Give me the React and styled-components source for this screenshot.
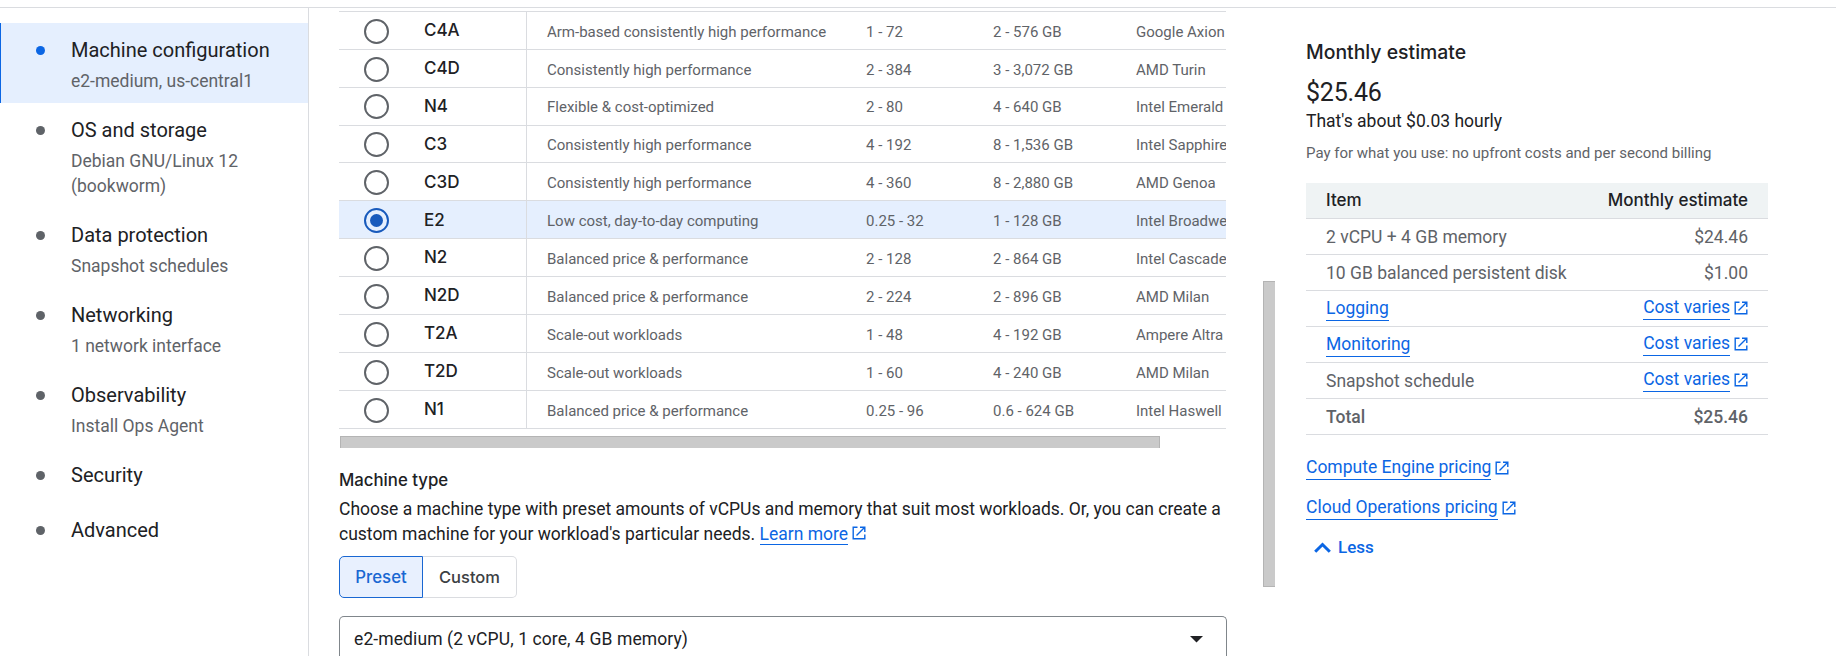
import React from "react";
import styled, { createGlobalStyle, css } from "styled-components";

const GlobalStyle = createGlobalStyle`
  * { box-sizing: border-box; }
  body {
    margin: 0;
    background: #fff;
    color: #202124;
    font-family: Roboto, "Liberation Sans", sans-serif;
    overflow: hidden;
  }
`;

const brand = css`
  font-family: Inter, "Liberation Sans", sans-serif;
  font-weight: 500;
`;

const Page = styled.div`
  height: 656px;
  padding-top: 7px;
  overflow: hidden;
`;

const Frame = styled.div`
  display: flex;
  height: 649px;
  border-top: 1px solid #dadce0;
`;

const Sidebar = styled.nav`
  width: 309px;
  flex: none;
  padding-top: 15px;
  border-right: 1px solid #dadce0;
`;

const Step = styled.div`
  display: flex;
  align-items: flex-start;
  padding: 15px 20px ${(p) => (p.$plain ? 15 : 9)}px 35px;
  border-left: 1px solid ${(p) => (p.$active ? "#0b66e4" : "transparent")};
  background: ${(p) => (p.$active ? "#e5effe" : "transparent")};
`;

const Dot = styled.span`
  width: 9px;
  height: 9px;
  margin: 8px 26px 0 0;
  border-radius: 50%;
  flex: none;
  background: ${(p) => (p.$active ? "#0b66e4" : "#5f6368")};
`;

const StepTitle = styled.div`
  font-size: 20px;
  line-height: 25px;
  white-space: nowrap;
`;

const StepNote = styled.div`
  width: 190px;
  margin-top: 6px;
  font-size: 17.5px;
  line-height: 25px;
  color: #5f6368;
`;

const Main = styled.main`
  width: 954px;
  flex: none;
  padding: 2.85px 0 0 30px;
  overflow: hidden;
`;

const TableView = styled.div`
  width: 887px;
  overflow: hidden;
`;

const Series = styled.div`
  width: 1080px;
  border-top: 1px solid #dadce0;
`;

const SeriesRow = styled.div`
  display: grid;
  grid-template-columns: 85px 103px 20px 319px 127px 143px 1fr;
  height: 37.9px;
  align-items: center;
  border-bottom: 1px solid #dadce0;
  background: ${(p) => (p.$selected ? "#e5effe" : "transparent")};
`;

const Radio = styled.span`
  display: flex;
  align-items: center;
  justify-content: center;
  width: 25px;
  height: 25px;
  margin: 1.85px 0 0 25px;
  border: 2px solid ${(p) => (p.$on ? "#185abc" : "#5f6368")};
  border-radius: 50%;

  &::after {
    content: "";
    width: 13px;
    height: 13px;
    border-radius: 50%;
    background: ${(p) => (p.$on ? "#185abc" : "transparent")};
  }
`;

const SeriesName = styled.div`
  ${brand}
  height: 100%;
  padding-top: 0.3px;
  border-right: 1px solid #dadce0;
  font-size: 17px;
  line-height: 36px;
`;

const Cell = styled.div`
  padding-top: 2.85px;
  font-size: 15px;
  line-height: 20px;
  color: #5f6368;
  white-space: nowrap;
`;

const ScrollX = styled.div`
  width: 820px;
  height: 12px;
  margin: 7px 0 0 1px;
  background: #cacaca;
  border: solid #b4b4b4;
  border-width: 1px 1px 0 1px;
`;

const MachineType = styled.section`
  width: 888px;
  padding-top: 20px;
`;

const SectionTitle = styled.h3`
  ${brand}
  margin: 0;
  font-size: 16.8px;
  line-height: 25px;
`;

const Paragraph = styled.p`
  margin: 4px 0 0;
  font-size: 17.5px;
  line-height: 25px;
  white-space: nowrap;
`;

const LinkText = styled.a`
  color: #0b66e4;
  border-bottom: 1px solid #0b66e4;
`;

const Toggle = styled.div`
  display: flex;
  width: 178px;
  height: 42px;
  margin-top: 9px;
`;

const ToggleButton = styled.button`
  ${brand}
  flex: ${(p) => (p.$on ? "0 0 84px" : "1")};
  padding: 0;
  border: 1px solid ${(p) => (p.$on ? "#1967d2" : "#dadce0")};
  border-left-width: ${(p) => (p.$on ? 1 : 0)}px;
  border-radius: ${(p) => (p.$on ? "5px 0 0 5px" : "0 5px 5px 0")};
  background: ${(p) => (p.$on ? "#e8f0fe" : "#fff")};
  color: ${(p) => (p.$on ? "#1967d2" : "#3c4043")};
  font-size: ${(p) => (p.$on ? 16.8 : 16.5)}px;
`;

const Select = styled.div`
  display: flex;
  align-items: center;
  justify-content: space-between;
  height: 46px;
  margin-top: 18px;
  padding: 0 23px 0 14px;
  border: 1px solid #80868b;
  border-bottom: 0;
  border-radius: 5px 5px 0 0;
  font-size: 17.5px;
  letter-spacing: 0.1px;
`;

const Rail = styled.div`
  width: 12px;
  flex: none;
  padding-top: 273px;
`;

const ScrollY = styled.div`
  height: 306px;
  background: #cacaca;
  border: solid #b4b4b4;
  border-width: 1px 0 1px 1px;
`;

const Estimate = styled.aside`
  width: 462px;
  margin-left: 31px;
  padding-top: 32px;
`;

const EstimateTitle = styled.h2`
  ${brand}
  margin: 0;
  font-size: 19.4px;
  line-height: 25px;
`;

const Price = styled.div`
  margin-top: 13px;
  font-size: 25px;
  line-height: 30px;
  letter-spacing: -0.2px;
`;

const Hourly = styled.div`
  margin-top: 1px;
  font-size: 17.5px;
  line-height: 25px;
`;

const Fine = styled.div`
  margin-top: 9px;
  font-size: 15px;
  line-height: 20px;
  color: #5f6368;
  white-space: nowrap;
`;

const CostTable = styled.div`
  margin-top: 20px;
`;

const CostRow = styled.div`
  display: flex;
  justify-content: space-between;
  align-items: center;
  height: 36px;
  padding: 0 20px;
  border-bottom: 1px solid #dadce0;
  color: #5f6368;
  font-size: 17.5px;
  font-weight: ${(p) => (p.$total ? 500 : 400)};
  line-height: 24px;
`;

const CostHead = styled(CostRow)`
  ${brand}
  padding-bottom: 2px;
  background: #eff3f4;
  color: #202124;
  font-size: 17px;
`;

const LinkWrap = styled.span`
  display: flex;
  align-items: center;
  line-height: 23px;
  margin-bottom: ${(p) => (p.$raised ? 1 : 0)}px;
`;

const MoreLinks = styled.div`
  display: flex;
  flex-direction: column;
  gap: 16px;
  margin-top: 21px;
  font-size: 17.5px;
`;

const Less = styled.button`
  display: flex;
  align-items: center;
  gap: 7px;
  margin-top: 17px;
  padding: 0 0 0 8px;
  border: 0;
  background: none;
  color: #0b66e4;
  font: 500 17px/20px Roboto, sans-serif;
`;

const Glyph = styled.svg`
  flex: none;
  margin-left: ${(p) => p.$gap || 0}px;
`;

function OpenIcon() {
  return (
    <Glyph $gap={4} width="14" height="14" viewBox="0 0 14 14" fill="none" stroke="#0b66e4" strokeWidth="1.4">
      <path d="M5.5 1.2H1.2V12.8H12.8V8.5M8 1.2H12.8V6M12.5 1.5L4.5 9.5" />
    </Glyph>
  );
}

function External({ children, raised }) {
  return (
    <LinkWrap $raised={raised}>
      <LinkText>{children}</LinkText>
      <OpenIcon />
    </LinkWrap>
  );
}

const steps = [
  ["Machine configuration", "e2-medium, us-central1"],
  ["OS and storage", "Debian GNU/Linux 12 (bookworm)"],
  ["Data protection", "Snapshot schedules"],
  ["Networking", "1 network interface"],
  ["Observability", "Install Ops Agent"],
  ["Security"],
  ["Advanced"],
];

const series = [
  ["C4A", "Arm-based consistently high performance", "1 - 72", "2 - 576 GB", "Google Axion"],
  ["C4D", "Consistently high performance", "2 - 384", "3 - 3,072 GB", "AMD Turin"],
  ["N4", "Flexible & cost-optimized", "2 - 80", "4 - 640 GB", "Intel Emerald"],
  ["C3", "Consistently high performance", "4 - 192", "8 - 1,536 GB", "Intel Sapphire"],
  ["C3D", "Consistently high performance", "4 - 360", "8 - 2,880 GB", "AMD Genoa"],
  ["E2", "Low cost, day-to-day computing", "0.25 - 32", "1 - 128 GB", "Intel Broadwell"],
  ["N2", "Balanced price & performance", "2 - 128", "2 - 864 GB", "Intel Cascade"],
  ["N2D", "Balanced price & performance", "2 - 224", "2 - 896 GB", "AMD Milan"],
  ["T2A", "Scale-out workloads", "1 - 48", "4 - 192 GB", "Ampere Altra"],
  ["T2D", "Scale-out workloads", "1 - 60", "4 - 240 GB", "AMD Milan"],
  ["N1", "Balanced price & performance", "0.25 - 96", "0.6 - 624 GB", "Intel Haswell"],
];

export default function App() {
  return (
    <Page>
      <GlobalStyle />
      <Frame>
        <Sidebar>
          {steps.map(([title, note], i) => (
            <Step key={title} $active={i === 0} $plain={!note}>
              <Dot $active={i === 0} />
              <div>
                <StepTitle>{title}</StepTitle>
                {note && <StepNote>{note}</StepNote>}
              </div>
            </Step>
          ))}
        </Sidebar>

        <Main>
          <TableView>
            <Series>
              {series.map(([name, desc, cpus, memory, platform]) => (
                <SeriesRow key={name} $selected={name === "E2"}>
                  <Radio $on={name === "E2"} />
                  <SeriesName>{name}</SeriesName>
                  <span />
                  <Cell>{desc}</Cell>
                  <Cell>{cpus}</Cell>
                  <Cell>{memory}</Cell>
                  <Cell>{platform}</Cell>
                </SeriesRow>
              ))}
            </Series>
          </TableView>
          <ScrollX />
          <MachineType>
            <SectionTitle>Machine type</SectionTitle>
            <Paragraph>
              Choose a machine type with preset amounts of vCPUs and memory that suit most workloads. Or, you can create a
              <br />
              custom machine for your workload's particular needs. <LinkText>Learn more</LinkText>
              <OpenIcon />
            </Paragraph>
            <Toggle>
              <ToggleButton $on>Preset</ToggleButton>
              <ToggleButton>Custom</ToggleButton>
            </Toggle>
            <Select>
              e2-medium (2 vCPU, 1 core, 4 GB memory)
              <Glyph width="13" height="7" viewBox="0 0 13 7" fill="#202124">
                <path d="M0 0H13L6.5 6.5Z" />
              </Glyph>
            </Select>
          </MachineType>
        </Main>

        <Rail>
          <ScrollY />
        </Rail>

        <Estimate>
          <EstimateTitle>Monthly estimate</EstimateTitle>
          <Price>$25.46</Price>
          <Hourly>That's about $0.03 hourly</Hourly>
          <Fine>Pay for what you use: no upfront costs and per second billing</Fine>
          <CostTable>
            <CostHead>
              <span>Item</span>
              <span>Monthly estimate</span>
            </CostHead>
            <CostRow>
              <span>2 vCPU + 4 GB memory</span>
              <span>$24.46</span>
            </CostRow>
            <CostRow>
              <span>10 GB balanced persistent disk</span>
              <span>$1.00</span>
            </CostRow>
            <CostRow>
              <LinkWrap><LinkText>Logging</LinkText></LinkWrap>
              <External raised>Cost varies</External>
            </CostRow>
            <CostRow>
              <LinkWrap><LinkText>Monitoring</LinkText></LinkWrap>
              <External raised>Cost varies</External>
            </CostRow>
            <CostRow>
              <span>Snapshot schedule</span>
              <External raised>Cost varies</External>
            </CostRow>
            <CostRow $total>
              <span>Total</span>
              <span>$25.46</span>
            </CostRow>
          </CostTable>
          <MoreLinks>
            <External>Compute Engine pricing</External>
            <External>Cloud Operations pricing</External>
          </MoreLinks>
          <Less>
            <svg width="17" height="11" viewBox="0 0 17 11" fill="none" stroke="#0b66e4" strokeWidth="3">
              <path d="M1.2 9.8L8.5 2.5L15.8 9.8" />
            </svg>
            Less
          </Less>
        </Estimate>
      </Frame>
    </Page>
  );
}
